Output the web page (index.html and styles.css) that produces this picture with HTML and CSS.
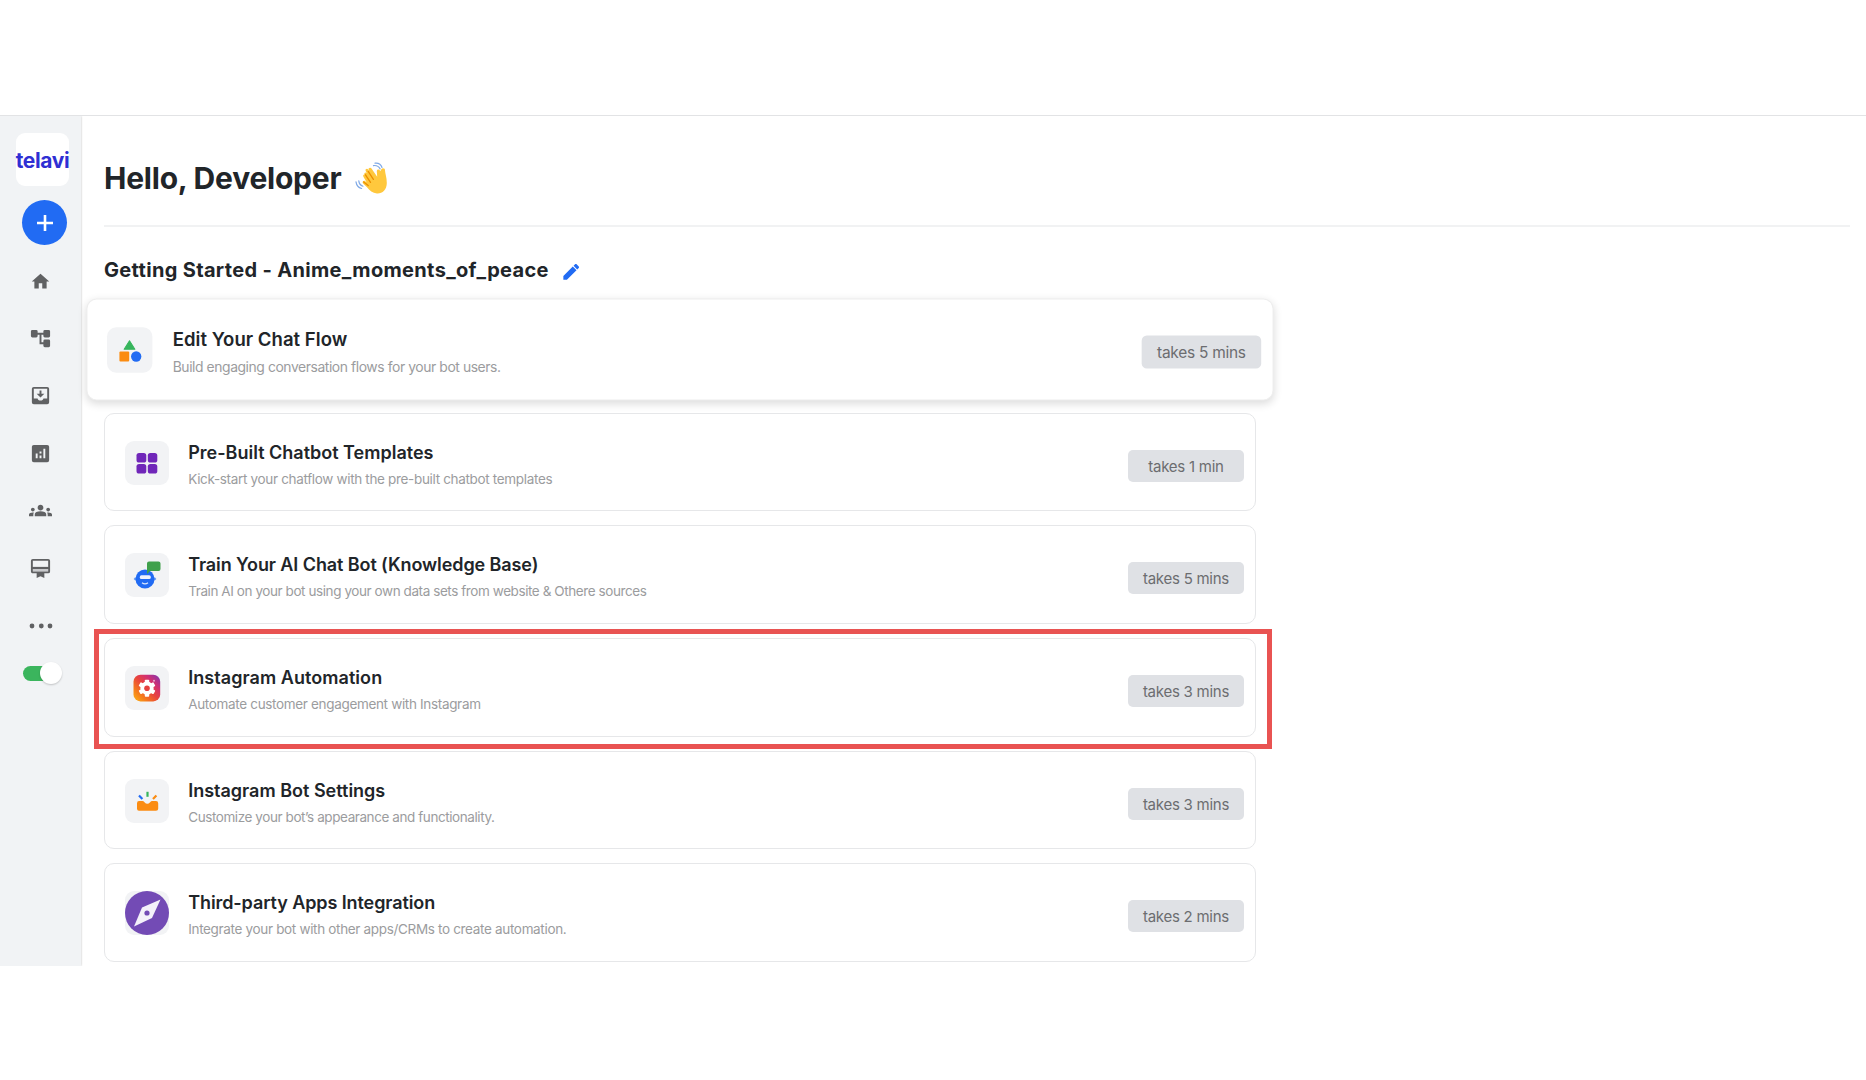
FILE: index.html
```html
<!DOCTYPE html>
<html lang="en">
<head>
<meta charset="utf-8">
<title>Telavi</title>
<link rel="stylesheet" href="styles.css">
</head>
<body>
<div class="app">
  <nav class="sidebar">
    <div class="logo">telavi</div>
    <button class="add" aria-label="Add"><svg width="18" height="18" viewBox="0 0 18 18"><path d="M9 1v16M1 9h16" stroke="#fff" stroke-width="2.600" fill="none"/></svg></button>
    <div class="menu">
      <a><svg width="21" height="21" viewBox="0 0 24 24"><path d="M10 20v-6h4v6h5v-8h3L12 3 2 12h3v8z"/></svg></a>
      <a><svg width="23" height="23" viewBox="0 0 24 24"><path d="M22 9.500V4.500Q22 3 20.500 3H16.500Q15 3 15 4.500V6H9V4.500Q9 3 7.500 3H3.500Q2 3 2 4.500v5Q2 11 3.500 11h4Q9 11 9 9.500V8h2v10h4v1.500Q15 21 16.500 21h4q1.500 0 1.500-1.500v-5q0-1.500-1.500-1.500h-4q-1.500 0-1.500 1.500V16h-2V8h2v1.500q0 1.500 1.500 1.500h4Q22 11 22 9.500z"/></svg></a>
      <a><svg width="23" height="23" viewBox="0 0 24 24"><path fill-rule="evenodd" d="M19 3H5a2 2 0 0 0-2 2v14a2 2 0 0 0 2 2h14a2 2 0 0 0 2-2V5a2 2 0 0 0-2-2zm0 12h-4c0 1.300-1.350 2.300-3 2.300s-3-1-3-2.300H5V5h14zM16 10.200h-3V6.800h-2v3.400H8l4 3.800z"/></svg></a>
      <a><svg width="23" height="23" viewBox="0 0 24 24"><path fill-rule="evenodd" d="M19 3H5a2 2 0 0 0-2 2v14a2 2 0 0 0 2 2h14a2 2 0 0 0 2-2V5a2 2 0 0 0-2-2zM9 17H7v-5h2zm4 0h-2v-3h2zm0-5h-2v-2h2zm4 5h-2V7h2z"/></svg></a>
      <a><svg width="23" height="23" viewBox="0 0 24 24"><path d="M12 12.750c1.630 0 3.070.39 4.240.9 1.080.48 1.760 1.560 1.760 2.730V18H6v-1.610c0-1.180.68-2.260 1.760-2.730 1.170-.52 2.610-.91 4.240-.91zM4 13c1.100 0 2-.9 2-2s-.9-2-2-2-2 .9-2 2 .9 2 2 2zm1.130 1.100c-.37-.06-.74-.1-1.130-.1-.99 0-1.930.21-2.780.58C.48 14.900 0 15.620 0 16.430V18h4.500v-1.610c0-.83.23-1.610.63-2.290zM20 13c1.100 0 2-.9 2-2s-.9-2-2-2-2 .9-2 2 .9 2 2 2zm4 3.430c0-.81-.48-1.530-1.220-1.850-.85-.37-1.790-.58-2.780-.58-.39 0-.76.04-1.130.1.4.68.63 1.460.63 2.290V18H24v-1.570zM12 6c1.660 0 3 1.340 3 3s-1.340 3-3 3-3-1.340-3-3 1.340-3 3-3z"/></svg></a>
      <a><svg width="23" height="23" viewBox="0 0 24 24"><path d="M4 10h16v5H4z" opacity=".28"/><path fill-rule="evenodd" d="M20 2H4a2 2 0 0 0-2 2v11c0 1.110.89 2 2 2h4v5l4-2 4 2v-5h4a2 2 0 0 0 2-2V4a2 2 0 0 0-2-2zm0 13H4v-2.500h16zm0-4.500H4V4h16z"/></svg></a>
      <a><svg width="24" height="6" viewBox="0 0 24 6"><circle cx="3" cy="3" r="2.400"/><circle cx="12.300" cy="3" r="2.400"/><circle cx="21" cy="3" r="2.400"/></svg></a>
    </div>
    <div class="toggle"><span class="knob"></span></div>
  </nav>

  <main class="content">
    <header class="greeting">
      <h1>Hello, Developer</h1>
      <svg class="wave" width="34" height="34" viewBox="0 0 34 34">
        <path d="M9.500 12.500c-.8-1.300 1.200-2.700 2.300-1.300l-1.100-2.300c-.9-1.600 1.500-2.900 2.500-1.300l1 1.300-.5-1.300c-.8-1.700 1.900-2.800 2.800-1.100l5.700 8.300-.4-5.200c-.1-2.600 2.900-2.600 3.400-.3l1.200-2c.8-1.800 4-1.200 3.600 1.200.1 2.700 1.800 7 1.800 12.400 0 7-4.700 10.900-9.900 10.500-4.200-.3-7.400-2.900-9.900-6.200l-4-3.800c-1.200-1.600.7-3.300 2.200-2.200l1.400 1-3.200-5.500c-.8-1.400.2-2.500 1.100-2.200z" fill="#ffc83d"/>
        <path d="m10.500 12.800 5 7.600M13.200 9.400l5.200 8M8.700 20l4.500 3.600" fill="none" stroke="#eb8f00" stroke-width="1.300" stroke-linecap="round"/>
        <path d="M18.500 3.600c3-.4 5.300.8 6.600 3.300M20 1.200c3.700-.4 6 1.200 7 4.300M3.800 18.900c.3 2.900 1.600 4.500 4.100 5.300M1 19.900c.5 3.400 2.500 5.800 5.600 6.600" fill="none" stroke="#7fa9e6" stroke-width="1.200" stroke-linecap="round"/>
      </svg>
    </header>

    <div class="project">
      <h2>Getting Started - Anime_moments_of_peace</h2>
      <svg width="16" height="16" viewBox="3 3 18 18"><path fill="#216bf3" d="M3.400 16.600V20.600h4L18.200 10l-4.200-4.200zM20.700 7.400c.5-.5.5-1.200 0-1.700L18.300 3.300c-.5-.5-1.200-.5-1.700 0l-1.700 1.700 4.100 4.100z"/></svg>
    </div>

    <section class="steps">
      <article class="step raised">
        <div class="tile"><svg width="44" height="44" viewBox="0 0 44 44"><path d="M21.800 13 27 21.300H16.600z" fill="#37b55c" stroke="#37b55c" stroke-linejoin="round"/><rect x="12" y="23.500" width="9.500" height="9.700" rx="1" fill="#fb8c12"/><circle cx="28.300" cy="28.300" r="5" fill="#216bf3"/></svg></div>
        <div class="text"><h3 class="t-edit">Edit Your Chat Flow</h3><p class="s-tight">Build engaging conversation flows for your bot users.</p></div>
        <span class="time">takes 5 mins</span>
      </article>
      <article class="step">
        <div class="tile"><svg width="44" height="44" viewBox="0 0 44 44" fill="#7026b9"><rect x="11.500" y="12" width="9.800" height="9.500" rx="2.600"/><rect x="22.800" y="12" width="9.500" height="9.500" rx="2.600"/><rect x="11.500" y="23" width="9.800" height="9.500" rx="2.600"/><rect x="22.800" y="23" width="9.500" height="9.500" rx="2.600"/></svg></div>
        <div class="text"><h3>Pre-Built Chatbot Templates</h3><p>Kick-start your chatflow with the pre-built chatbot templates</p></div>
        <span class="time">takes 1 min</span>
      </article>
      <article class="step">
        <div class="tile"><svg width="44" height="44" viewBox="0 0 44 44"><ellipse cx="20" cy="26" rx="11.300" ry="2.700" fill="#6b9cf3"/><circle cx="20" cy="26" r="9.500" fill="#216bf3"/><rect x="14.800" y="22.300" width="11" height="3.800" rx="1.600" fill="#eef3fe"/><path d="M17 29.700q3 2.400 6 0" fill="none" stroke="#dbe7fd" stroke-width="1.200"/><path d="M24 8.500h9.500q2 0 2 2v5.500q0 2-2 2H25l-3 3V10.500q0-2 2-2z" fill="#3fa04b"/></svg></div>
        <div class="text"><h3 class="t-snug">Train Your AI Chat Bot (Knowledge Base)</h3><p class="s-tight">Train AI on your bot using your own data sets from website &amp; Othere sources</p></div>
        <span class="time">takes 5 mins</span>
      </article>
      <article class="step marked">
        <div class="tile"><svg width="44" height="44" viewBox="0 0 44 44"><defs><linearGradient id="insta" x1="0" y1="1" x2="1" y2="0"><stop offset="0" stop-color="#fdb515"/><stop offset=".25" stop-color="#f57c1c"/><stop offset=".5" stop-color="#e9453c"/><stop offset=".72" stop-color="#d22f72"/><stop offset="1" stop-color="#7b35b5"/></linearGradient></defs><rect x="8.500" y="8.700" width="26.700" height="26.700" rx="7" fill="url(#insta)"/><g transform="translate(22 22.200)" fill="#fff"><circle r="6.600"/><rect x="-2.200" y="-8.500" width="4.400" height="17" rx=".8"/><rect x="-2.200" y="-8.500" width="4.400" height="17" rx=".8" transform="rotate(60)"/><rect x="-2.200" y="-8.500" width="4.400" height="17" rx=".8" transform="rotate(120)"/><circle r="2.800" fill="#e5413f"/></g><circle cx="29" cy="14.700" r="1" fill="#e9a9cd"/></svg></div>
        <div class="text"><h3 class="t-wide">Instagram Automation</h3><p>Automate customer engagement with Instagram</p></div>
        <span class="time">takes 3 mins</span>
      </article>
      <article class="step">
        <div class="tile"><svg width="44" height="44" viewBox="0 0 44 44"><path d="M14 22h3.500q1 0 2 1.300 2.800 3 5.600 0 1-1.300 2-1.300H31q2.200 0 2.200 2.200v5.600q0 2-2.200 2H14q-2 0-2-2v-5.600Q12 22 14 22z" fill="#fb8c12"/><path d="M22.500 12.800v5" stroke="#37b55c" stroke-width="2.200"/><path d="m14 16.500 3.400 3.500" stroke="#216bf3" stroke-width="2.200"/><path d="M31.400 16.500 28 20" stroke="#fb8c12" stroke-width="2.200"/></svg></div>
        <div class="text"><h3>Instagram Bot Settings</h3><p class="s-tight">Customize your bot’s appearance and functionality.</p></div>
        <span class="time">takes 3 mins</span>
      </article>
      <article class="step">
        <div class="tile"><svg width="44" height="44" viewBox="0 0 44 44"><circle cx="22" cy="22" r="22" fill="#734bb5"/><path d="M35.500 8.500 27 27 9 35.500 17 16.500z" fill="#f4f1fa"/><circle cx="22" cy="22" r="2.600" fill="#734bb5"/></svg></div>
        <div class="text"><h3 class="t-snug">Third-party Apps Integration</h3><p>Integrate your bot with other apps/CRMs to create automation.</p></div>
        <span class="time">takes 2 mins</span>
      </article>
    </section>
  </main>
</div>
</body>
</html>
```
FILE: styles.css
```css
* { box-sizing: border-box; }
body {
  margin: 0;
  padding-top: 115px;
  background: #fff;
  color: #212529;
  font-family: Inter, "Open Sans", sans-serif;
}
h1, h2, h3, p { margin: 0; }
svg { display: block; flex: none; }

.app {
  display: flex;
  height: 851px;
  border-top: 1px solid #e2e3e5;
}

.sidebar {
  width: 81px;
  flex: none;
  padding-top: 17px;
  background: #f1f3f5;
  box-shadow: 0 0 2px rgba(0, 0, 0, .28);
  clip-path: inset(0 -4px 0 0);
}
.logo {
  display: flex;
  justify-content: center;
  width: 53px;
  height: 53px;
  margin-left: 16px;
  border-radius: 9px;
  background: #fff;
  color: #2f2fd3;
  font-size: 21px;
  font-weight: 700;
  line-height: 55px;
  letter-spacing: -.35px;
  white-space: nowrap;
}
.add {
  display: flex;
  align-items: center;
  justify-content: center;
  width: 45px;
  height: 45px;
  margin: 14px 0 0 22px;
  padding: 0;
  border: 0;
  border-radius: 50%;
  background: #216bf3;
}
.menu { margin-top: 7.500px; }
.menu a {
  display: flex;
  align-items: center;
  justify-content: center;
  height: 57.4px;
  fill: #606163;
}
.toggle {
  display: flex;
  align-items: center;
  justify-content: flex-end;
  width: 39px;
  height: 15px;
  margin: 11.500px 0 0 22.500px;
  border-radius: 8px;
  background: linear-gradient(90deg, #3bb55d 30px, transparent 30px);
}
.knob {
  flex: none;
  width: 22px;
  height: 22px;
  border-radius: 50%;
  background: #fff;
  box-shadow: 0 1px 2px rgba(0, 0, 0, .2);
}

.content { flex: 1; padding: 0 16px 0 23px; }
.greeting {
  display: flex;
  align-items: center;
  height: 111px;
  padding-top: 14px;
  border-bottom: 2px solid #f1f2f3;
}
h1 {
  font-size: 30px;
  font-weight: 700;
  letter-spacing: -.22px;
  line-height: 36px;
}
.wave { margin: 2px 0 0 14px; }
.project {
  display: flex;
  align-items: flex-start;
  gap: 14px;
  height: 73px;
  padding-top: 30px;
}
.project svg { margin-top: 7px; }
h2 {
  font-size: 20px;
  font-weight: 700;
  letter-spacing: .33px;
  line-height: 26px;
}

.steps {
  display: flex;
  flex-direction: column;
  gap: 14px;
  width: 1152px;
}
.step {
  position: relative;
  display: flex;
  align-items: flex-start;
  height: 98.700px;
  padding: 27px 11px 0 19.500px;
  border: 1px solid #e6e7e9;
  border-radius: 10px;
  background: #fff;
}
.raised {
  transform: scale(1.0305);
  border-color: #eee;
  box-shadow: 0 3px 8px rgba(0, 0, 0, .14);
}
.raised .tile { margin-left: -.5px; }
.marked::after {
  content: "";
  position: absolute;
  inset: -10px -17px -13px -11px;
  border: 5px solid #e95352;
}
.tile {
  width: 44px;
  height: 44px;
  border-radius: 9px;
  background: #f2f3f5;
}
.text { flex: 1; margin-left: 19.700px; }
h3 {
  margin-bottom: 2px;
  font-size: 18px;
  font-weight: 600;
  line-height: 24px;
}
.t-edit { letter-spacing: .02px; }
.t-snug { letter-spacing: -.09px; }
.t-wide { letter-spacing: .06px; }
p {
  color: #9b9c9e;
  font-size: 13.500px;
  letter-spacing: -.33px;
  line-height: 24px;
}
.s-tight { letter-spacing: -.42px; }
.time {
  width: 116px;
  height: 32px;
  margin-top: 9px;
  border-radius: 5px;
  background: #dfe1e5;
  color: #6c6d70;
  font-size: 15px;
  letter-spacing: -.25px;
  line-height: 33px;
  text-align: center;
}
.raised .time { margin-top: 8px; }
```
